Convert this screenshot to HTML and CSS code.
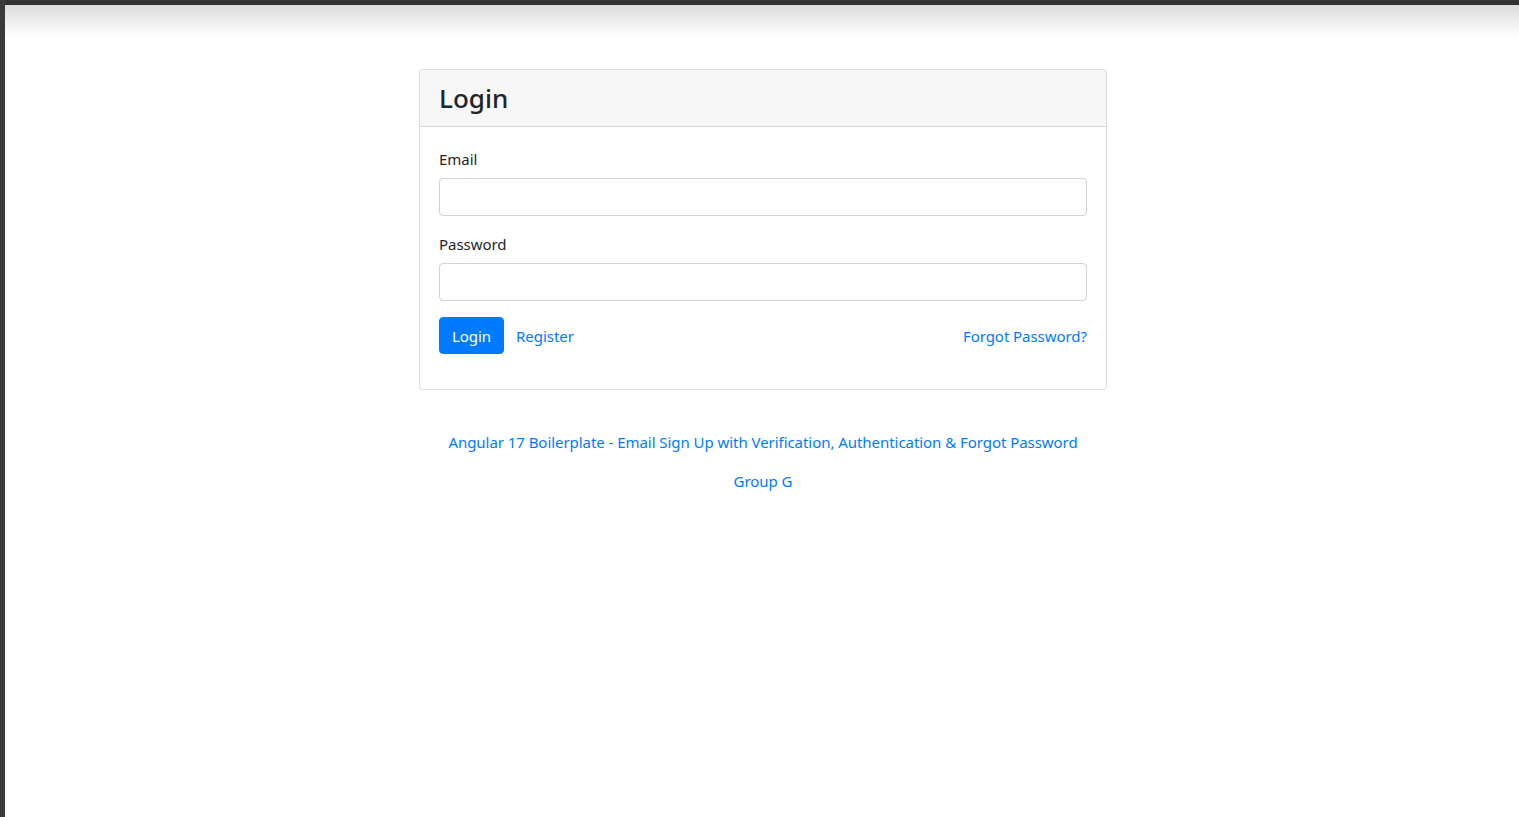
FILE: index.html
```html
<!DOCTYPE html>
<html lang="en">
<head>
<meta charset="utf-8">
<title>Login</title>
<link rel="stylesheet" href="styles.css">
</head>
<body>
<div class="frame">
  <div class="shade"></div>
  <div class="page">
    <div class="card">
      <div class="card-header"><h3>Login</h3></div>
      <div class="card-body">
        <div class="form-group">
          <label class="label">Email</label>
          <input class="input" type="text">
        </div>
        <div class="form-group">
          <label class="label">Password</label>
          <input class="input" type="password">
        </div>
        <div class="form-group actions">
          <div class="actions-left">
            <button class="btn">Login</button>
            <a class="link reg" href="#">Register</a>
          </div>
          <a class="link" href="#">Forgot Password?</a>
        </div>
      </div>
    </div>
    <div class="footer">
      <p><a class="link" href="#">Angular 17 Boilerplate - Email Sign Up with Verification, Authentication &amp; Forgot Password</a></p>
      <p><a class="link" href="#">Group G</a></p>
    </div>
  </div>
</div>
</body>
</html>
```
FILE: styles.css
```css
html, body {
  margin: 0;
  padding: 0;
  height: 100%;
}
body {
  background: #3a3a3a;
  font-family: "Noto Sans", "Open Sans", sans-serif;
  font-size: 15px;
  letter-spacing: -0.05px;
  line-height: 24px;
  color: #212529;
}
.frame {
  margin-left: 5px;
  border-top: 5px solid #333;
  background: #fff;
  min-height: calc(100% - 5px);
  position: relative;
}
.shade {
  position: absolute;
  left: 0;
  right: 0;
  top: 0;
  height: 32px;
  background: linear-gradient(#dcdcdc, #fff);
}
.page {
  position: relative;
  display: flex;
  flex-direction: column;
  align-items: center;
  padding-top: 64px;
  padding-left: 2px;
}
.card {
  width: 688px;
  box-sizing: border-box;
  border: 1px solid rgba(0,0,0,.125);
  border-radius: 4px;
  background: #fff;
}
.card-header {
  background: #f7f7f7;
  border-bottom: 1px solid rgba(0,0,0,.125);
  padding: 12px 19px;
  border-radius: 3px 3px 0 0;
}
.card-header h3 {
  margin: 0;
  font-size: 26px;
  line-height: 32px;
  font-weight: 500;
  letter-spacing: 0;
  color: #212529;
}
.card-body {
  padding: 20px 19px 19px;
}
.form-group {
  margin-bottom: 16px;
}
.label {
  display: block;
  margin-bottom: 7px;
}
.input {
  display: block;
  width: 100%;
  box-sizing: border-box;
  height: 38px;
  border: 1px solid #ced4da;
  border-radius: 4px;
  padding: 6px 12px;
  font-size: 16px;
  background: #fff;
}
.actions {
  display: flex;
  justify-content: space-between;
  align-items: center;
}
.actions-left {
  display: flex;
  align-items: center;
  gap: 12px;
}
.btn {
  height: 37px;
  padding: 0 12px;
  border: 1px solid #007bff;
  border-radius: 4px;
  background: #007bff;
  color: #fff;
  font-family: inherit;
  font-size: 15px;
  letter-spacing: -0.05px;
  cursor: pointer;
}
.link {
  color: #007bff;
  text-decoration: none;
}
.footer {
  padding-top: 40px;
  text-align: center;
}
.footer p {
  margin: 0 0 15px;
}
```
